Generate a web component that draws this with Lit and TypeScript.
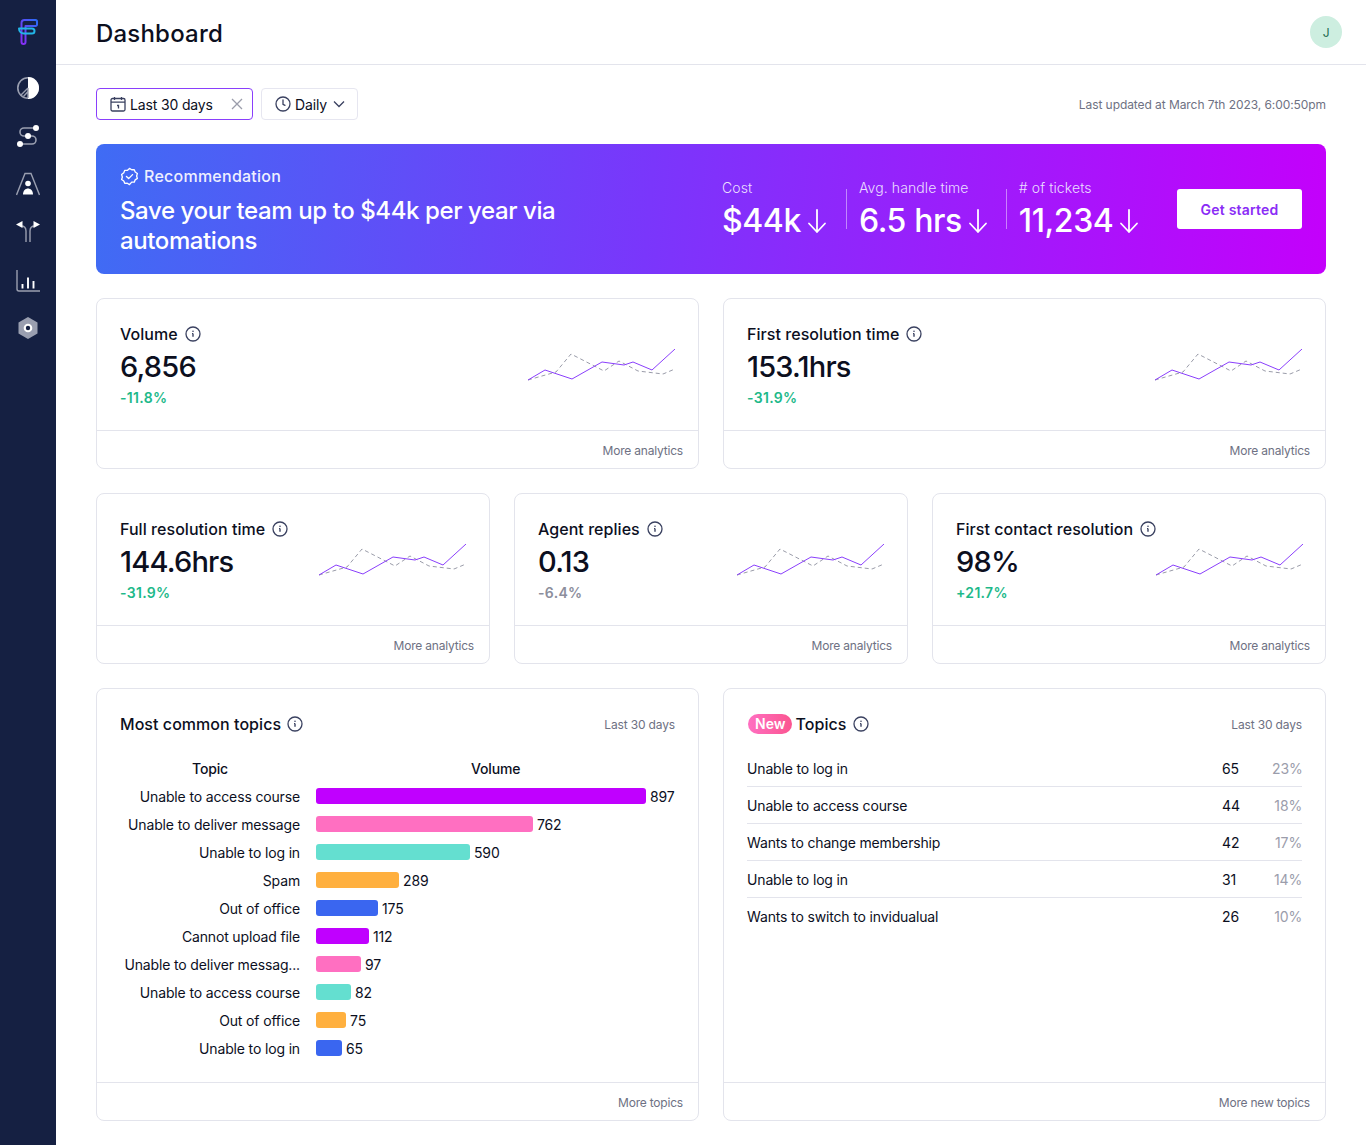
import { LitElement, css, html, svg } from "lit";
import { customElement } from "lit/decorators.js";

const infoIcon = html`<svg class="info" viewBox="0 0 16 16" fill="none" stroke="#3a4160" stroke-width="1.3">
  <circle cx="8" cy="8" r="7" />
  <path d="M8 7.4v3.4" stroke-width="1.4" />
  <path d="M7 7.5h1" stroke-width="1" />
  <circle cx="8" cy="5.2" r=".8" fill="#3a4160" stroke="none" />
</svg>`;

const arrowDown = html`<svg class="arrow" viewBox="0 0 20 26" fill="none" stroke="#fff" stroke-width="1.8" stroke-linecap="round" stroke-linejoin="round">
  <path d="M10 2v22M2 15.5l8 8.5 8-8.5" />
</svg>`;

const sparkline = html`<svg class="spark" viewBox="0 0 147 32" fill="none">
  <polyline points="0,31 28,23 43,5 76,22 91,12 110,22 135,25 147,20" stroke="#9a9ca9" stroke-width="1" stroke-dasharray="4 3" />
  <polyline points="0,31 17,21 44,30 74,13 96,16 105,13 124,21 147,0" stroke="#8a3ffc" stroke-width="1" />
</svg>`;

const navIcons = [
  svg`<circle cx="12" cy="12" r="10.2" fill="none" stroke="#9a9fb0" stroke-width="1.6" />
    <path d="M12 1a11 11 0 0 1 0 22z" fill="#fff" />
    <path d="M12 12 4.5 19.5M12 12v10M7.5 20.5l4.5-5" fill="none" stroke="#9a9fb0" stroke-width="1.4" />`,
  svg`<path d="M19 4H8a4 4 0 0 0 0 8h8a4 4 0 0 1 0 8H5" fill="none" stroke="#9a9fb0" stroke-width="1.6" />
    <circle cx="20" cy="4" r="3" fill="#fff" /><circle cx="12" cy="12" r="3" fill="#fff" /><circle cx="4" cy="20" r="3" fill="#fff" />`,
  svg`<path d="M.5 23 9 1.5h6L23.5 23" fill="none" stroke="#9a9fb0" stroke-width="1.4" />
    <circle cx="12" cy="11.5" r="2.8" fill="#fff" /><path d="M7 22.5c0-8 10-8 10 0z" fill="#fff" />`,
  svg`<path d="M10 22V11c0-3-2-5-5-5M14 22V11c0-3 2-5 5-5" fill="none" stroke="#9a9fb0" stroke-width="1.4" />
    <path d="M0 4.5 6.5 1v7zM24 4.5 17.500 1v7z" fill="#fff" />`,
  svg`<path d="M1 2v19a2 2 0 0 0 2 2h21" fill="none" stroke="#9a9fb0" stroke-width="1.4" />
    <path d="M6.5 16v4.500M12 9.500v11M17.500 13v7.500" fill="none" stroke="#fff" stroke-width="1.9" />`,
  svg`<path d="M12 1 21.500 6.500v11L12 23l-9.500-5.500v-11z" fill="#9a9fb0" />
    <circle cx="12" cy="12" r="4.3" fill="#fff" /><circle cx="12" cy="12" r="2.2" fill="#152042" />`,
];

type Stat = { title: string; value: string; delta: string; tone?: string };

const topStats: Stat[] = [
  { title: "Volume", value: "6,856", delta: "-11.8%" },
  { title: "First resolution time", value: "153.1hrs", delta: "-31.9%" },
];
const midStats: Stat[] = [
  { title: "Full resolution time", value: "144.6hrs", delta: "-31.9%" },
  { title: "Agent replies", value: "0.13", delta: "-6.4%", tone: "muted" },
  { title: "First contact resolution", value: "98%", delta: "+21.7%" },
];

const COLORS = ["#c000ff", "#ff6fc1", "#64dfd0", "#ffb03f", "#3a66f0"];

const bars = [
  ["Unable to access course", 897, 330],
  ["Unable to deliver message", 762, 217],
  ["Unable to log in", 590, 154],
  ["Spam", 289, 83],
  ["Out of office", 175, 62],
  ["Cannot upload file", 112, 53],
  ["Unable to deliver messag...", 97, 45],
  ["Unable to access course", 82, 35],
  ["Out of office", 75, 30],
  ["Unable to log in", 65, 26],
] as const;

const newTopics = [
  ["Unable to log in", "65", "23%"],
  ["Unable to access course", "44", "18%"],
  ["Wants to change membership", "42", "17%"],
  ["Unable to log in", "31", "14%"],
  ["Wants to switch to invidualual", "26", "10%"],
];

@customElement("app-root")
export class AppRoot extends LitElement {
  static styles = css`
    :host {
      display: flex;
      min-height: 1145px;
      font-family: "Inter", "Liberation Sans", sans-serif;
      letter-spacing: -0.15px;
      color: #0c0f1e;
      background: #fff;
    }

    .sidebar {
      width: 56px;
      flex: none;
      background: #152042;
      display: flex;
      flex-direction: column;
      align-items: center;
      padding-top: 19px;
    }
    .logo {
      width: 20px;
      height: 26px;
      margin-bottom: 31px;
    }
    .nav {
      display: flex;
      flex-direction: column;
      gap: 24px;
    }
    .nav svg {
      display: block;
      width: 24px;
      height: 24px;
    }

    main {
      flex: 1;
      min-width: 0;
    }
    header {
      height: 65px;
      box-sizing: border-box;
      border-bottom: 1px solid #e3e4ec;
      display: flex;
      align-items: center;
      justify-content: space-between;
      padding: 2px 24px 0 40px;
    }
    h1 {
      margin: 0;
      font-size: 24px;
      font-weight: 500;
      letter-spacing: 0.2px;
    }
    .avatar {
      width: 32px;
      height: 32px;
      margin-top: -2px;
      border-radius: 50%;
      background: #cdeee0;
      color: #1d6b50;
      font-size: 12px;
      display: flex;
      align-items: center;
      justify-content: center;
    }

    .content {
      padding: 23px 40px 24px;
      display: flex;
      flex-direction: column;
      gap: 24px;
    }

    .filters {
      display: flex;
      align-items: center;
      gap: 8px;
      height: 32px;
    }
    .chip {
      height: 32px;
      box-sizing: border-box;
      border: 1px solid #e6e6f0;
      border-radius: 4px;
      display: flex;
      align-items: center;
      font-size: 14px;
      padding: 0 10px 0 13px;
      gap: 4px;
    }
    .chip.active {
      border-color: #8a3ffc;
      width: 157px;
      padding-right: 9px;
    }
    .chip svg {
      width: 16px;
      height: 16px;
      flex: none;
    }
    .chip .close {
      margin-left: auto;
      width: 12px;
      height: 12px;
    }
    .updated {
      margin-left: auto;
      font-size: 12px;
      letter-spacing: -0.07px;
      color: #6e7183;
    }

    .banner {
      height: 130px;
      box-sizing: border-box;
      border-radius: 8px;
      padding: 0 24px;
      background: linear-gradient(95deg, #3f6cf4 0%, #7a36fb 45%, #c400fb 100%);
      color: #fff;
      display: flex;
      align-items: center;
    }
    .rec {
      width: 470px;
      padding-top: 4px;
    }
    .rec-label {
      display: flex;
      align-items: center;
      gap: 5px;
      font-size: 16px;
      font-weight: 500;
      letter-spacing: 0.25px;
      color: #eef0ff;
    }
    .rec-label svg {
      width: 19px;
      height: 19px;
    }
    .headline {
      font-size: 24px;
      line-height: 30px;
      font-weight: 500;
      letter-spacing: -0.4px;
      margin-top: 10px;
    }
    .metrics {
      margin-left: 132px;
      padding-top: 1px;
      display: flex;
    }
    .metric {
      padding: 0 18px 0 13px;
      position: relative;
    }
    .metric:first-child {
      padding: 0 19px 0 0;
    }
    .metric:not(:first-child)::before {
      content: "";
      position: absolute;
      left: 0;
      top: 11px;
      height: 40px;
      width: 1px;
      background: rgba(255, 255, 255, 0.45);
    }
    .metric-label {
      font-size: 14px;
      line-height: 20px;
      font-weight: 300;
      letter-spacing: 0.1px;
      white-space: nowrap;
      color: #eadfff;
    }
    .metric-value {
      display: flex;
      align-items: center;
      gap: 6px;
      font-size: 32px;
      line-height: 40px;
      font-weight: 500;
      letter-spacing: -0.4px;
      margin-top: 3px;
      white-space: nowrap;
    }
    .arrow {
      width: 20px;
      height: 26px;
    }
    .cta {
      margin-left: auto;
      width: 125px;
      height: 40px;
      background: #fff;
      border: none;
      border-radius: 3px;
      font: inherit;
      font-size: 14px;
      font-weight: 600;
      letter-spacing: 0.2px;
      color: #8a2cf6;
    }

    .row {
      display: grid;
      gap: 24px;
    }
    .two {
      grid-template-columns: repeat(2, minmax(0, 1fr));
    }
    .three {
      grid-template-columns: repeat(3, minmax(0, 1fr));
    }

    .card {
      border: 1px solid #e3e4ec;
      border-radius: 8px;
      display: flex;
      flex-direction: column;
      box-sizing: border-box;
    }
    .card-foot {
      height: 38px;
      flex: none;
      box-sizing: border-box;
      border-top: 1px solid #e3e4ec;
      display: flex;
      align-items: center;
      justify-content: flex-end;
      padding: 2px 15px 0;
      font-size: 12px;
      letter-spacing: -0.2px;
      color: #6e7183;
    }
    .stat {
      height: 171px;
    }
    .stat-body {
      flex: 1;
      display: flex;
      justify-content: space-between;
      padding: 25px 23px 0;
    }
    .stat-title {
      display: flex;
      align-items: center;
      gap: 7px;
      font-size: 16px;
      font-weight: 500;
      line-height: 20px;
      letter-spacing: 0.05px;
      white-space: nowrap;
    }
    .info {
      width: 16px;
      height: 16px;
      flex: none;
    }
    .stat-value {
      font-size: 29px;
      line-height: 36px;
      font-weight: 500;
      letter-spacing: -0.8px;
      margin-top: 5px;
    }
    .delta {
      font-size: 14px;
      font-weight: 600;
      letter-spacing: 0.3px;
      color: #1db98a;
      margin-top: 4px;
    }
    .delta.muted {
      color: #8c8e9c;
    }
    .spark {
      width: 147px;
      height: 32px;
      margin-top: 25px;
      flex: none;
    }

    .wide {
      height: 433px;
    }
    .wide-body {
      flex: 1;
      padding: 25px 23px 0;
    }
    .wide-head {
      display: flex;
      align-items: center;
      justify-content: space-between;
      height: 20px;
    }
    .wide-head .when {
      font-size: 12px;
      color: #6e7183;
    }
    .wide-title {
      display: flex;
      align-items: center;
      gap: 6px;
      font-size: 16px;
      font-weight: 500;
      letter-spacing: 0.05px;
    }
    .badge {
      background: linear-gradient(90deg, #ff6fc1, #fb5590);
      color: #fff;
      font-size: 14px;
      font-weight: 600;
      line-height: 20px;
      padding: 0 6px 0 7px;
      border-radius: 10px;
      margin: 0 -2px 0 1px;
    }

    .chart {
      display: grid;
      grid-template-columns: 180px 1fr;
      column-gap: 16px;
      margin-top: 25px;
      font-size: 14px;
    }
    .chart-head {
      font-weight: 500;
      height: 24px;
      line-height: 20px;
    }
    .chart-head.topic {
      text-align: right;
      padding-right: 72px;
    }
    .chart-head.volume {
      padding-left: 155px;
    }
    .chart-label {
      height: 28px;
      line-height: 28px;
      text-align: right;
      white-space: nowrap;
    }
    .chart-bar {
      height: 28px;
      box-sizing: border-box;
      padding-bottom: 2px;
      display: flex;
      align-items: center;
      gap: 4px;
    }
    .bar {
      height: 16px;
      border-radius: 3px;
    }

    .topic-list {
      margin-top: 16px;
      font-size: 14px;
    }
    .topic-row {
      height: 37px;
      box-sizing: border-box;
      display: flex;
      align-items: center;
      border-bottom: 1px solid #e3e4ec;
    }
    .topic-row:last-child {
      border-bottom: none;
    }
    .topic-row .count {
      margin-left: auto;
      width: 50px;
    }
    .topic-row .share {
      width: 30px;
      text-align: right;
      color: #9b9dab;
    }
  `;

  private renderStat(s: Stat) {
    return html`<div class="card stat">
      <div class="stat-body">
        <div>
          <div class="stat-title">${s.title} ${infoIcon}</div>
          <div class="stat-value">${s.value}</div>
          <div class="delta ${s.tone ?? ""}">${s.delta}</div>
        </div>
        ${sparkline}
      </div>
      <div class="card-foot">More analytics</div>
    </div>`;
  }

  render() {
    return html`
      <aside class="sidebar">
        <svg class="logo" viewBox="0 0 20 26" fill="none" stroke-width="2" stroke-linejoin="round">
          <defs>
            <linearGradient id="logoA" x1="0" y1="1" x2="1" y2="0">
              <stop offset="0" stop-color="#8b2cf5" />
              <stop offset="1" stop-color="#2a6bf6" />
            </linearGradient>
          </defs>
          <path d="M19 2.5A1.5 1.5 0 0 0 17.5 1H6.5a3 3 0 0 0-3 3v19a2 2 0 0 0 4 0V7H17.5A1.5 1.5 0 0 0 19 5.5z" stroke="url(#logoA)" />
          <path d="M1 9.5h13a2.5 2.5 0 0 1 0 5H6a5 5 0 0 1-5-5z" stroke="#22b6e8" />
        </svg>
        <nav class="nav">
          ${navIcons.map((icon) => html`<svg viewBox="0 0 24 24">${icon}</svg>`)}
        </nav>
      </aside>
      <main>
        <header>
          <h1>Dashboard</h1>
          <div class="avatar">J</div>
        </header>
        <div class="content">
          <div class="filters">
            <div class="chip active">
              <svg viewBox="0 0 16 16" fill="none" stroke="#3a4160" stroke-width="1.3">
                <rect x="1" y="2.5" width="14" height="12.5" rx="1.5" />
                <path d="M1 6.2h14M4.5 1v3M11.5 1v3M7 9.5h1.5v3" />
              </svg>
              Last 30 days
              <svg class="close" viewBox="0 0 12 12" fill="none" stroke="#9b9dab" stroke-width="1.3">
                <path d="M1 1l10 10M11 1 1 11" />
              </svg>
            </div>
            <div class="chip">
              <svg viewBox="0 0 16 16" fill="none" stroke="#3a4160" stroke-width="1.3" stroke-linecap="round">
                <circle cx="8" cy="8" r="7" />
                <path d="M8 4v4.3l2 1" />
              </svg>
              Daily
              <svg viewBox="0 0 16 16" fill="none" stroke="#3a4160" stroke-width="1.3">
                <path d="M3 5.5l5 5 5-5" />
              </svg>
            </div>
            <div class="updated">Last updated at March 7th 2023, 6:00:50pm</div>
          </div>

          <section class="banner">
            <div class="rec">
              <div class="rec-label">
                <svg viewBox="0 0 20 20" fill="none" stroke="#fff" stroke-width="1.4" stroke-linejoin="round" stroke-linecap="round">
                  <path d="M10 1.5l2.3 1.4 2.7-.1 1 2.5 2.3 1.5-.8 2.6.8 2.6-2.3 1.5-1 2.5-2.7-.1L10 18.500l-2.3-1.4-2.7.1-1-2.5-2.3-1.5.8-2.6-.8-2.6L4 6l1-2.5 2.7.1z" />
                  <path d="M6.8 10l2.3 2.2 4.1-4.2" />
                </svg>
                Recommendation
              </div>
              <div class="headline">Save your team up to $44k per year via automations</div>
            </div>
            <div class="metrics">
              <div class="metric">
                <div class="metric-label">Cost</div>
                <div class="metric-value">$44k ${arrowDown}</div>
              </div>
              <div class="metric">
                <div class="metric-label">Avg. handle time</div>
                <div class="metric-value">6.5 hrs ${arrowDown}</div>
              </div>
              <div class="metric">
                <div class="metric-label"># of tickets</div>
                <div class="metric-value">11,234 ${arrowDown}</div>
              </div>
            </div>
            <button class="cta">Get started</button>
          </section>

          <div class="row two">${topStats.map((s) => this.renderStat(s))}</div>
          <div class="row three">${midStats.map((s) => this.renderStat(s))}</div>

          <div class="row two">
            <div class="card wide">
              <div class="wide-body">
                <div class="wide-head">
                  <div class="wide-title">Most common topics ${infoIcon}</div>
                  <div class="when">Last 30 days</div>
                </div>
                <div class="chart">
                  <div class="chart-head topic">Topic</div>
                  <div class="chart-head volume">Volume</div>
                  ${bars.map(
                    ([label, value, width], i) => html`
                      <div class="chart-label">${label}</div>
                      <div class="chart-bar">
                        <div class="bar" style="width:${width}px;background:${COLORS[i % COLORS.length]}"></div>
                        ${value}
                      </div>
                    `
                  )}
                </div>
              </div>
              <div class="card-foot">More topics</div>
            </div>
            <div class="card wide">
              <div class="wide-body">
                <div class="wide-head">
                  <div class="wide-title"><span class="badge">New</span> Topics ${infoIcon}</div>
                  <div class="when">Last 30 days</div>
                </div>
                <div class="topic-list">
                  ${newTopics.map(
                    ([name, count, share]) => html`<div class="topic-row">
                      <span>${name}</span>
                      <span class="count">${count}</span>
                      <span class="share">${share}</span>
                    </div>`
                  )}
                </div>
              </div>
              <div class="card-foot">More new topics</div>
            </div>
          </div>
        </div>
      </main>
    `;
  }
}
